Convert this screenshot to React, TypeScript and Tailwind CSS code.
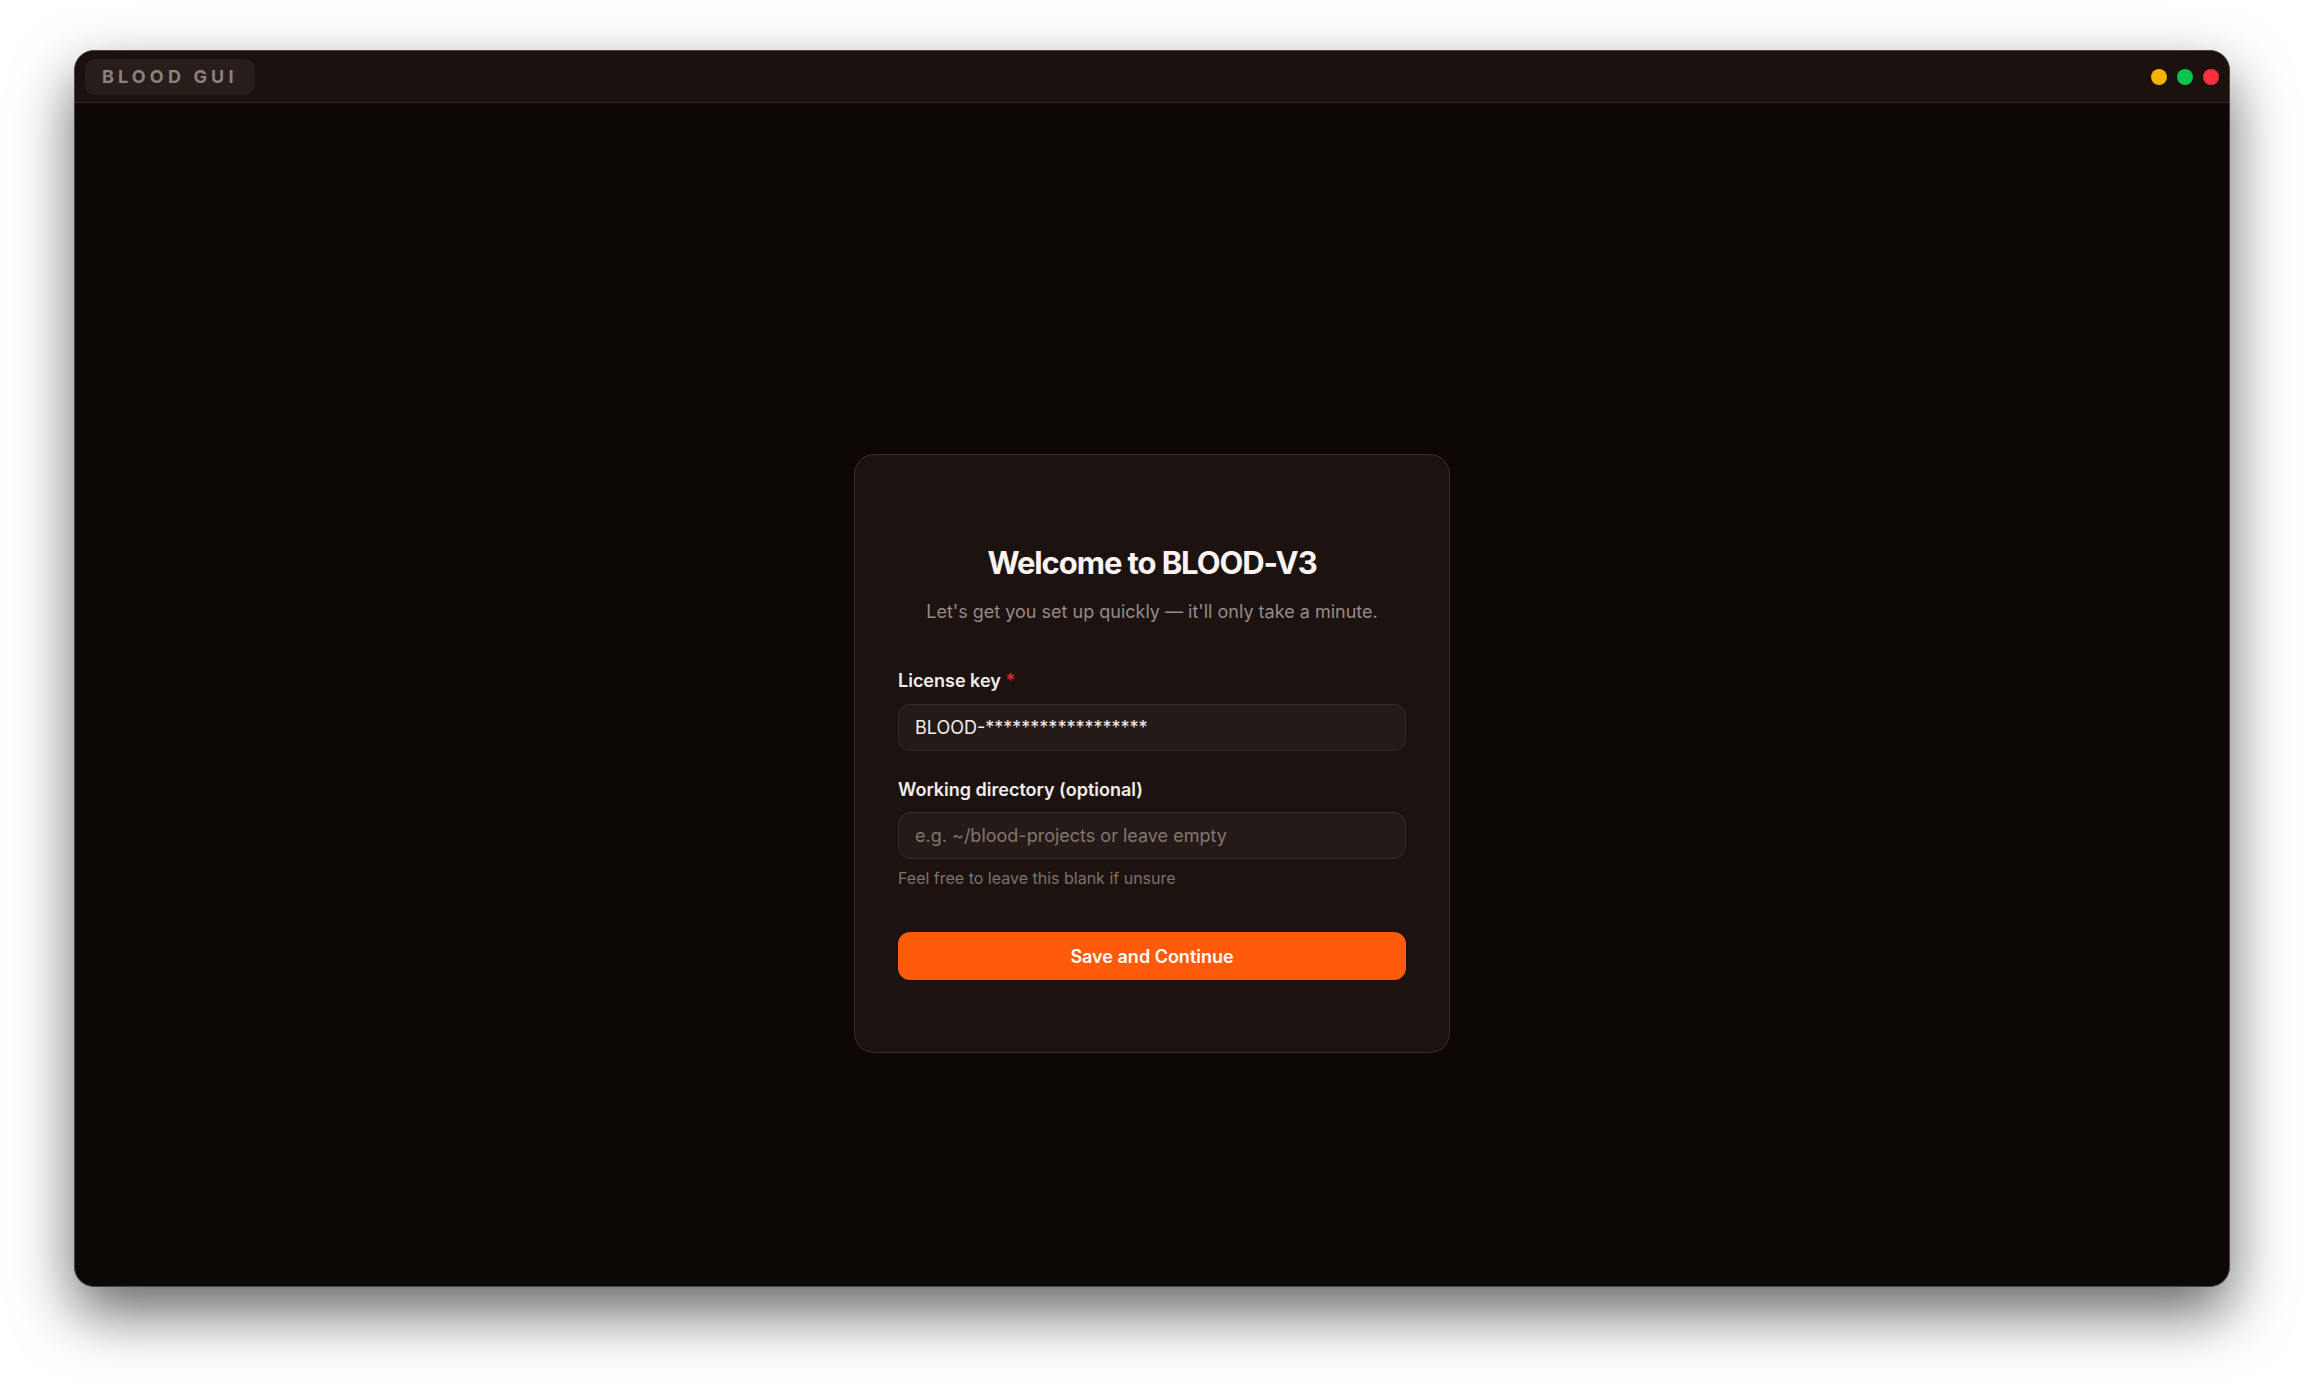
import { useState } from "react";

const font = { fontFamily: "Inter, 'Noto Sans', sans-serif" };

const TrafficLights = () => (
  <div className="flex items-center gap-[10px]">
    <span className="size-4 rounded-full bg-[#f4b400]" />
    <span className="size-4 rounded-full bg-[#0cc551]" />
    <span className="size-4 rounded-full bg-[#fe2f3f]" />
  </div>
);

const SetupCard = () => {
  const [license, setLicense] = useState("BLOOD-******************");
  const [dir, setDir] = useState("");

  return (
    <div className="w-[596px] rounded-[20px] border border-[#392e2a] bg-[#1c1310] px-[43px] pt-[90px] pb-[72px]">
      <h1 className="text-center text-[31px] leading-[36px] font-bold tracking-[-0.035em] text-[#fcf4f2]">
        Welcome to BLOOD-V3
      </h1>
      <p className="mt-[19px] text-center text-[18px] leading-6 text-[#968b87]">
        Let's get you set up quickly — it'll only take a minute.
      </p>

      <label className="mt-[45px] block text-[18px] leading-6 font-semibold text-[#f4edeb]">
        License key <span className="text-[#e0242c]">*</span>
      </label>
      <input
        className="mt-[11px] h-[47px] w-full rounded-xl border border-[#342a27] bg-[#241b18] px-4 text-[18px] text-[#f4edeb] outline-none"
        value={license}
        onChange={(e) => setLicense(e.target.value)}
        style={font}
      />

      <label className="mt-[27px] block text-[18px] leading-6 font-semibold text-[#f4edeb]">
        Working directory (optional)
      </label>
      <input
        className="mt-[10px] h-[47px] w-full rounded-xl border border-[#342a27] bg-[#241b18] px-4 text-[18px] text-[#f4edeb] placeholder:text-[#82776f] outline-none"
        placeholder="e.g. ~/blood-projects or leave empty"
        value={dir}
        onChange={(e) => setDir(e.target.value)}
        style={font}
      />
      <p className="mt-[9px] text-[16px] leading-5 text-[#7d726e]">Feel free to leave this blank if unsure</p>

      <button className="mt-[44px] h-[48px] w-full rounded-xl bg-[#ff5b0b] text-[18px] font-semibold text-white">
        Save and Continue
      </button>
    </div>
  );
};

export default function App() {
  return (
    <div className="h-[1386px] w-full bg-white px-[74px] pt-[50px] pb-[99px]" style={font}>
      <div className="flex h-full flex-col overflow-hidden rounded-[20px] border-[1.5px] border-[#4b4542] bg-[#0d0806] shadow-[0_26px_60px_rgba(0,0,0,0.6)]">
        <div className="flex h-[52px] shrink-0 items-center justify-between border-b border-[#352a27] bg-[#1b1210] pl-[10px] pr-[10px]">
          <div className="flex h-9 items-center rounded-[10px] bg-[#271d1a] px-[17px] text-[18px] font-bold tracking-[0.23em] text-[#8c817e]">
            BLOOD GUI
          </div>
          <TrafficLights />
        </div>
        <div className="flex flex-1 items-start justify-center pt-[351px]">
          <SetupCard />
        </div>
      </div>
    </div>
  );
}
